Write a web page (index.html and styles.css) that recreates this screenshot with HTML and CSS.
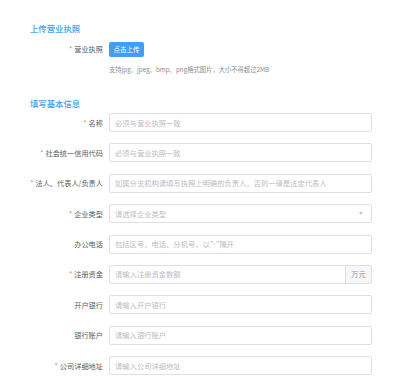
FILE: index.html
```html
<!DOCTYPE html>
<html lang="zh-CN">
<head>
<meta charset="utf-8">
<title>企业信息</title>
<link rel="stylesheet" href="styles.css">
</head>
<body>
<div class="page">
  <h2 class="section-title first">上传营业执照</h2>
  <div class="upload-row">
    <label class="label"><span class="req">*</span><span>营业执照</span></label>
    <button class="btn">点击上传</button>
  </div>
  <div class="help">支持jpg、jpeg、bmp、png格式图片，大小不得超过2MB</div>

  <h2 class="section-title second">填写基本信息</h2>
  <div class="form">
    <div class="row">
      <label class="label"><span class="req">*</span><span>名称</span></label>
      <div class="field"><input class="input" placeholder="必须与营业执照一致"></div>
    </div>
    <div class="row">
      <label class="label"><span class="req">*</span><span>社会统一信用代码</span></label>
      <div class="field"><input class="input" placeholder="必须与营业执照一致"></div>
    </div>
    <div class="row">
      <label class="label"><span class="req">*</span><span>法人、代表人/负责人</span></label>
      <div class="field"><input class="input" placeholder="如属分支机构请填写执照上明确的负责人，否则一律是法定代表人"></div>
    </div>
    <div class="row">
      <label class="label"><span class="req">*</span><span>企业类型</span></label>
      <div class="field select"><span class="select-text">请选择企业类型</span><span class="caret"></span></div>
    </div>
    <div class="row">
      <label class="label"><span>办公电话</span></label>
      <div class="field"><input class="input" placeholder='包括区号、电话、分机号，以"-"隔开'></div>
    </div>
    <div class="row">
      <label class="label"><span class="req">*</span><span>注册资金</span></label>
      <div class="field group"><input class="input" placeholder="请输入注册资金数额"><span class="append">万元</span></div>
    </div>
    <div class="row">
      <label class="label"><span>开户银行</span></label>
      <div class="field"><input class="input" placeholder="请输入开户银行"></div>
    </div>
    <div class="row">
      <label class="label"><span>银行账户</span></label>
      <div class="field"><input class="input" placeholder="请输入银行账户"></div>
    </div>
    <div class="row">
      <label class="label"><span class="req">*</span><span>公司详细地址</span></label>
      <div class="field"><input class="input" placeholder="请输入公司详细地址"></div>
    </div>
  </div>
</div>
</body>
</html>
```

FILE: styles.css
```css
html, body {
  margin: 0;
  padding: 0;
  background: #ffffff;
}

body {
  font-family: "Noto Sans CJK SC", "Noto Sans", sans-serif;
  color: #606266;
}

.page {
  padding: 22px 23px 0 30px;
}

.section-title {
  margin: 0;
  font-size: 8.4px;
  line-height: 12px;
  font-weight: 500;
  color: #409eff;
}

.upload-row {
  display: flex;
  align-items: center;
  margin-top: 8px;
  height: 14px;
}

.label {
  flex: 0 0 79px;
  min-width: 0;
  box-sizing: border-box;
  padding-right: 6px;
  display: flex;
  justify-content: flex-end;
  align-items: center;
  font-size: 7.2px;
  line-height: 10px;
  color: #5a5c61;
  white-space: nowrap;
}

.label span {
  flex: none;
}

.req {
  color: #f56c6c;
  margin-right: 2px;
}

.btn {
  width: 35px;
  height: 15px;
  margin: 0;
  padding: 0;
  border: none;
  border-radius: 2px;
  background: #409eff;
  color: #ffffff;
  font-family: inherit;
  font-size: 6.5px;
  line-height: 15px;
}

.help {
  margin: 9px 0 0 79px;
  font-size: 6.3px;
  line-height: 10px;
  color: #8c8e93;
  white-space: nowrap;
}

.section-title.second {
  margin-top: 21.5px;
}

.form {
  margin-top: 4.5px;
}

.row {
  display: flex;
  align-items: center;
  height: 19px;
  margin-bottom: 11.4px;
}

.field {
  flex: 0 0 263px;
  height: 19px;
  box-sizing: border-box;
  border: 1px solid #dcdfe6;
  border-radius: 2px;
  display: flex;
  align-items: center;
  background: #fff;
}

.input {
  flex: 1;
  min-width: 0;
  height: 100%;
  box-sizing: border-box;
  border: none;
  outline: none;
  margin: 0;
  padding: 0 5px;
  background: transparent;
  font-family: inherit;
  font-size: 7.3px;
  color: #606266;
}

.input::placeholder {
  color: #b9bdc5;
}

.select {
  padding: 0 8px 0 5px;
  justify-content: space-between;
}

.select-text {
  font-size: 7.3px;
  color: #b9bdc5;
}

.caret {
  width: 0;
  height: 0;
  border-left: 2.8px solid transparent;
  border-right: 2.8px solid transparent;
  border-top: 3px solid #c0c4cc;
}

.append {
  flex: 0 0 26px;
  height: 100%;
  box-sizing: border-box;
  border-left: 1px solid #dcdfe6;
  background: #f5f7fa;
  color: #909399;
  font-size: 7.2px;
  display: flex;
  align-items: center;
  justify-content: center;
}
```
